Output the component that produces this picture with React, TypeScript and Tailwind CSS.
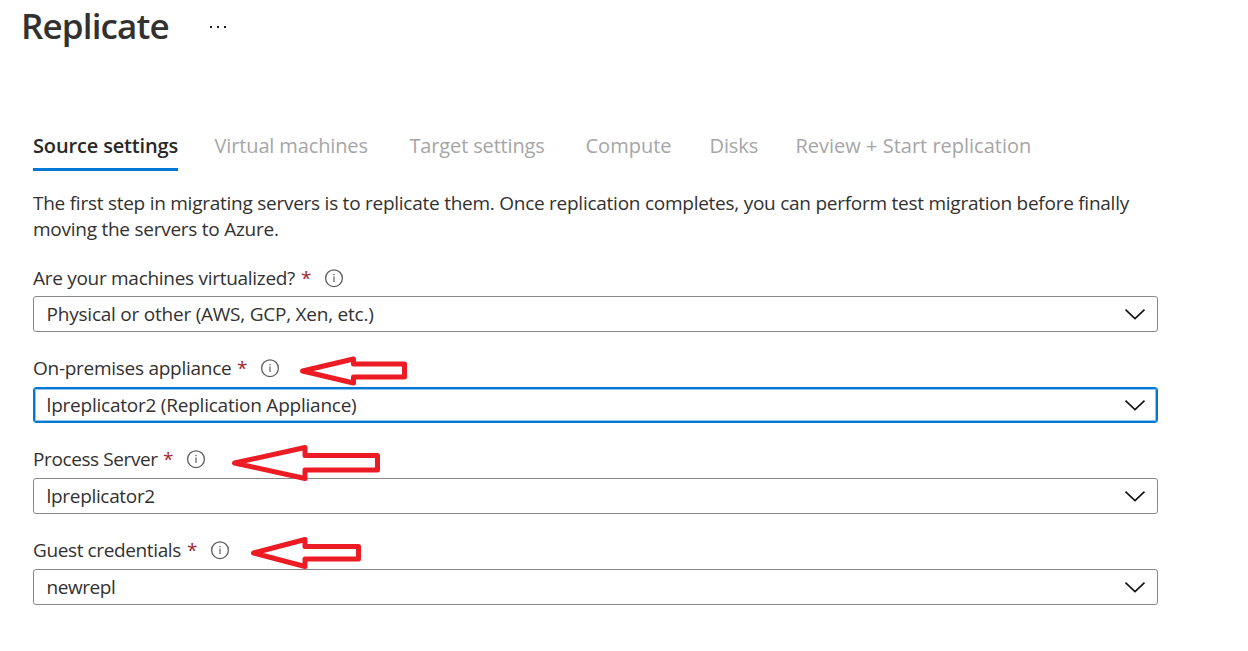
type ArrowShape = { className: string; width: number; height: number; points: string };

type FieldProps = {
  label: string;
  labelClass: string;
  value: string;
  valueClass: string;
  rowClass?: string;
  focused?: boolean;
  arrow?: ArrowShape;
};

const tabs = [
  { name: "Virtual machines", className: "w-[195px] tracking-[-0.13px]" },
  { name: "Target settings", className: "w-[176px] tracking-[-0.15px]" },
  { name: "Compute", className: "w-[124px]" },
  { name: "Disks", className: "w-[86px] tracking-[-0.1px]" },
  { name: "Review + Start replication", className: "" },
];

const fields: FieldProps[] = [
  {
    label: "Are your machines virtualized?",
    labelClass: "w-[268px] tracking-[-0.29px]",
    value: "Physical or other (AWS, GCP, Xen, etc.)",
    valueClass: "tracking-[-0.23px]",
    rowClass: "mb-[5px]",
  },
  {
    label: "On-premises appliance",
    labelClass: "w-[204px] tracking-[-0.27px]",
    value: "lpreplicator2 (Replication Appliance)",
    valueClass: "tracking-[-0.23px]",
    focused: true,
    arrow: {
      className: "left-[267px] top-0",
      width: 108,
      height: 32,
      points: "2.5,16 53.5,4 53.5,9 104.5,9 104.5,22 53.5,22 53.5,28",
    },
  },
  {
    label: "Process Server",
    labelClass: "w-[130px] tracking-[-0.4px]",
    value: "lpreplicator2",
    valueClass: "tracking-[-0.33px]",
    arrow: {
      className: "left-[199px] top-[-2px]",
      width: 150,
      height: 38,
      points: "2.5,19 73,3.5 73,11.5 145.5,11.5 145.5,26 73,26 73,34.5",
    },
  },
  {
    label: "Guest credentials",
    labelClass: "w-[154px] tracking-[-0.38px]",
    value: "newrepl",
    valueClass: "tracking-[-0.45px]",
    arrow: {
      className: "left-[218px] top-[-1px]",
      width: 112,
      height: 34,
      points: "2.5,17 54,3.5 54,10.5 107.5,10.5 107.5,23 54,23 54,30.5",
    },
  },
];

function InfoIcon() {
  return (
    <svg width="20" height="20" viewBox="0 0 20 20" fill="none" className="shrink-0">
      <circle cx="10" cy="10.2" r="8.4" stroke="#605e5c" strokeWidth="1.3" />
      <path d="M10 8.6V14" stroke="#605e5c" strokeWidth="1.2" />
      <path d="M10 5.9V7.3" stroke="#605e5c" strokeWidth="1.3" />
    </svg>
  );
}

function Chevron() {
  return (
    <svg width="22" height="12" viewBox="0 0 22 12" fill="none" className="shrink-0">
      <path d="M1.5 1.7L11 10.7L20.5 1.7" stroke="#111" strokeWidth="1.6" />
    </svg>
  );
}

function Arrow({ className, width, height, points }: ArrowShape) {
  return (
    <svg width={width} height={height} className={`absolute z-10 ${className}`} fill="none">
      <polygon points={points} stroke="#ed1c24" strokeWidth="5" strokeLinejoin="round" />
    </svg>
  );
}

function Field({ label, labelClass, value, valueClass, rowClass = "mb-[6px]", focused, arrow }: FieldProps) {
  return (
    <div className="relative">
      <div className={`flex h-[26px] items-center leading-[26px] ${rowClass}`}>
        <span className={`shrink-0 whitespace-nowrap ${labelClass}`}>{label}</span>
        <span className="w-[23px] shrink-0 text-[#a4262c]">*</span>
        <InfoIcon />
      </div>
      <div
        className={`flex h-9 items-center justify-between rounded-[3px] border pl-[12.6px] pr-[11px] leading-[34px] ${
          focused
            ? "border-[#0078d4] shadow-[inset_0_0_0_1px_#0078d4,inset_0_0_0_2px_#8fc5ee]"
            : "border-[#8a8886]"
        }`}
      >
        <span className={`whitespace-nowrap ${valueClass}`}>{value}</span>
        <Chevron />
      </div>
      {arrow && <Arrow {...arrow} />}
    </div>
  );
}

export default function App() {
  return (
    <main className="h-[651px] w-[1248px] overflow-hidden bg-white font-['Open_Sans',sans-serif] text-[19px] text-[#323130]">
      <header className="flex h-[132px] items-start pl-[21px] pt-[2px]">
        <h1 className="w-[188px] text-[35px] font-semibold leading-[48px] tracking-[-0.85px]">Replicate</h1>
        <svg width="20" height="4" className="mt-[23px]" fill="#1b1a19">
          <rect x="1" y="1" width="2" height="2" />
          <rect x="8" y="1" width="2" height="2" />
          <rect x="15" y="1" width="2" height="2" />
        </svg>
      </header>
      <nav className="flex h-[39px] pl-[33px] text-[20px] leading-[28px] text-[#a6a6a6]">
        <div className="mr-[36.5px] h-[39px] w-[145px] whitespace-nowrap border-b-3 border-[#0078d4] font-semibold tracking-[-0.15px] text-[#292827]">
          Source settings
        </div>
        {tabs.map((tab) => (
          <div key={tab.name} className={`shrink-0 whitespace-nowrap ${tab.className}`}>
            {tab.name}
          </div>
        ))}
      </nav>
      <section className="ml-[33px] w-[1125px] pt-[19px]">
        <p className="whitespace-nowrap leading-[26px] tracking-[-0.255px]">
          The first step in migrating servers is to replicate them. Once replication completes, you can perform test
          migration before finally
          <br />
          moving the servers to Azure.
        </p>
        <div className="mt-[23px] flex flex-col gap-[23px]">
          {fields.map((field) => (
            <Field key={field.label} {...field} />
          ))}
        </div>
      </section>
    </main>
  );
}
